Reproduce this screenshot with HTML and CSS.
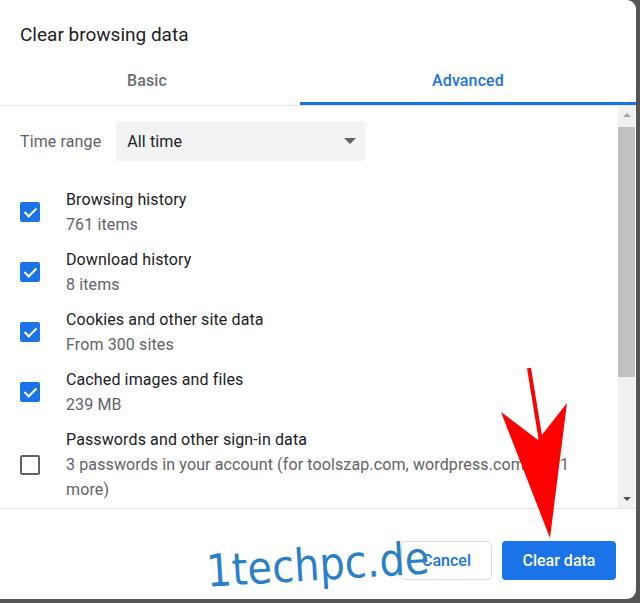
FILE: index.html
```html
<!DOCTYPE html>
<html lang="en">
<head>
    <meta charset="UTF-8">
    <meta name="viewport" content="width=device-width, initial-scale=1.0">
    <title>Clear browsing data</title>
    <link rel="stylesheet" href="styles.css">
</head>
<body>
    <div class="dialog">
        <h1 class="title">Clear browsing data</h1>
        <div class="tabs">
            <div class="tab tab-basic">Basic</div>
            <div class="tab tab-advanced active">Advanced</div>
        </div>
        <div class="body">
            <div class="content">
                <div class="range-row">
                    <span class="range-label">Time range</span>
                    <div class="select">
                        <span>All time</span>
                        <span class="caret"></span>
                    </div>
                </div>
                <div class="item">
                    <span class="checkbox checked"></span>
                    <div class="item-text">
                        <div class="item-title">Browsing history</div>
                        <div class="item-sub">761 items</div>
                    </div>
                </div>
                <div class="item">
                    <span class="checkbox checked"></span>
                    <div class="item-text">
                        <div class="item-title">Download history</div>
                        <div class="item-sub">8 items</div>
                    </div>
                </div>
                <div class="item">
                    <span class="checkbox checked"></span>
                    <div class="item-text">
                        <div class="item-title">Cookies and other site data</div>
                        <div class="item-sub">From 300 sites</div>
                    </div>
                </div>
                <div class="item">
                    <span class="checkbox checked"></span>
                    <div class="item-text">
                        <div class="item-title">Cached images and files</div>
                        <div class="item-sub">239 MB</div>
                    </div>
                </div>
                <div class="item">
                    <span class="checkbox"></span>
                    <div class="item-text">
                        <div class="item-title">Passwords and other sign-in data</div>
                        <div class="item-sub">3 passwords in your account (for toolszap.com, wordpress.com and 1 more)</div>
                    </div>
                </div>
            </div>
            <div class="scrollbar">
                <span class="arrow arrow-up"></span>
                <div class="track">
                    <div class="thumb"></div>
                </div>
                <span class="arrow arrow-down"></span>
            </div>
        </div>
        <div class="footer">
            <button type="button" class="btn btn-cancel">Cancel</button>
            <button type="button" class="btn btn-primary">Clear data</button>
        </div>
    </div>

    <div class="watermark">1techpc.de</div>

    <svg class="pointer" width="640" height="603" viewBox="0 0 640 603">
        <line x1="529" y1="368" x2="541" y2="442" stroke="#ff0000" stroke-width="4"/>
        <polygon points="501,412 538,440 567,403 550,538" fill="#ff0000"/>
    </svg>
</body>
</html>
```

FILE: styles.css
```css
body {
    margin: 0;
    width: 640px;
    height: 603px;
    overflow: hidden;
    background-color: #555555;
    font-family: Roboto, "Liberation Sans", Arial, sans-serif;
    letter-spacing: 0.12px;
    color: #202124;
    position: relative;
}

.dialog {
    width: 636px;
    height: 599px;
    background-color: #fff;
    border-radius: 0 9px 9px 0;
    display: flex;
    flex-direction: column;
    overflow: hidden;
}

.title {
    margin: 0;
    padding: 23px 20px 0;
    font-size: 19px;
    font-weight: 400;
    line-height: 24px;
    letter-spacing: 0;
    color: #202124;
}

.tabs {
    display: flex;
    height: 48px;
    margin-top: 10px;
    border-bottom: 1px solid #e3e3e3;
}

.tab {
    display: flex;
    align-items: center;
    justify-content: center;
    font-size: 16px;
    font-weight: 500;
    color: #6b6e72;
    box-sizing: border-box;
    padding-top: 1px;
    border-bottom: 3px solid transparent;
}

.tab-basic {
    width: 294px;
}

.tab-advanced {
    flex: 1;
    margin-left: 6px;
}

.tab.active {
    color: #1a73e8;
    border-bottom-color: #1a73e8;
}

.body {
    flex: 1;
    display: flex;
    min-height: 0;
    border-bottom: 1px solid #e3e3e3;
}

.content {
    flex: 1;
    padding: 15px 22px 0 20px;
    overflow: hidden;
}

.range-row {
    display: flex;
    align-items: center;
    gap: 15px;
    margin-bottom: 26px;
}

.range-label {
    font-size: 16px;
    color: #5f6368;
}

.select {
    width: 250px;
    height: 40px;
    box-sizing: border-box;
    background-color: #f1f3f4;
    border-radius: 4px;
    padding: 0 10px 0 11px;
    display: flex;
    align-items: center;
    justify-content: space-between;
    font-size: 16px;
    color: #202124;
}

.caret {
    width: 0;
    height: 0;
    border-left: 6px solid transparent;
    border-right: 6px solid transparent;
    border-top: 6px solid #5f6368;
}

.item {
    display: flex;
    align-items: center;
    padding-bottom: 10px;
}

.checkbox {
    width: 20px;
    height: 20px;
    box-sizing: border-box;
    border: 2px solid #5f6368;
    border-radius: 2px;
    flex-shrink: 0;
    margin-right: 26px;
    position: relative;
}

.checkbox.checked {
    background-color: #1a73e8;
    border-color: #1a73e8;
}

.checkbox.checked::after {
    content: "";
    position: absolute;
    left: 5px;
    top: 1px;
    width: 5px;
    height: 10px;
    border-right: 2px solid #fff;
    border-bottom: 2px solid #fff;
    transform: rotate(45deg);
}

.item-text {
    font-size: 16px;
    line-height: 25px;
}

.item-title {
    color: #202124;
}

.item-sub {
    color: #5f6368;
}

.scrollbar {
    width: 17px;
    margin-right: 1px;
    background-color: #f1f1f1;
    display: flex;
    flex-direction: column;
    align-items: center;
}

.arrow {
    width: 0;
    height: 0;
    border-left: 4px solid transparent;
    border-right: 4px solid transparent;
    margin: 7px 0;
}

.arrow-up {
    border-bottom: 4px solid #a3a3a3;
}

.arrow-down {
    border-top: 4px solid #505050;
}

.track {
    flex: 1;
    width: 100%;
}

.thumb {
    height: 250px;
    margin-top: 3px;
    background-color: #c1c1c1;
}

.footer {
    height: 90px;
    box-sizing: border-box;
    display: flex;
    justify-content: flex-end;
    align-items: center;
    gap: 10px;
    padding: 12px 20px 0;
}

.btn {
    height: 39px;
    border-radius: 4px;
    font-family: Roboto, "Liberation Sans", Arial, sans-serif;
    font-size: 16px;
    font-weight: 500;
    cursor: pointer;
}

.btn-cancel {
    width: 91px;
    background-color: #fff;
    color: #1a73e8;
    border: 1px solid #dadce0;
}

.btn-primary {
    width: 114px;
    background-color: #1a73e8;
    color: #fff;
    border: none;
}

.watermark {
    position: absolute;
    left: 208px;
    top: 550px;
    font-family: "DejaVu Sans", Verdana, sans-serif;
    font-size: 40px;
    letter-spacing: 0;
    color: #2a7fc9;
    line-height: 48px;
    transform: rotate(-3.5deg) scale(1, 1.12);
    transform-origin: left bottom;
}

.pointer {
    position: absolute;
    left: 0;
    top: 0;
}
```
